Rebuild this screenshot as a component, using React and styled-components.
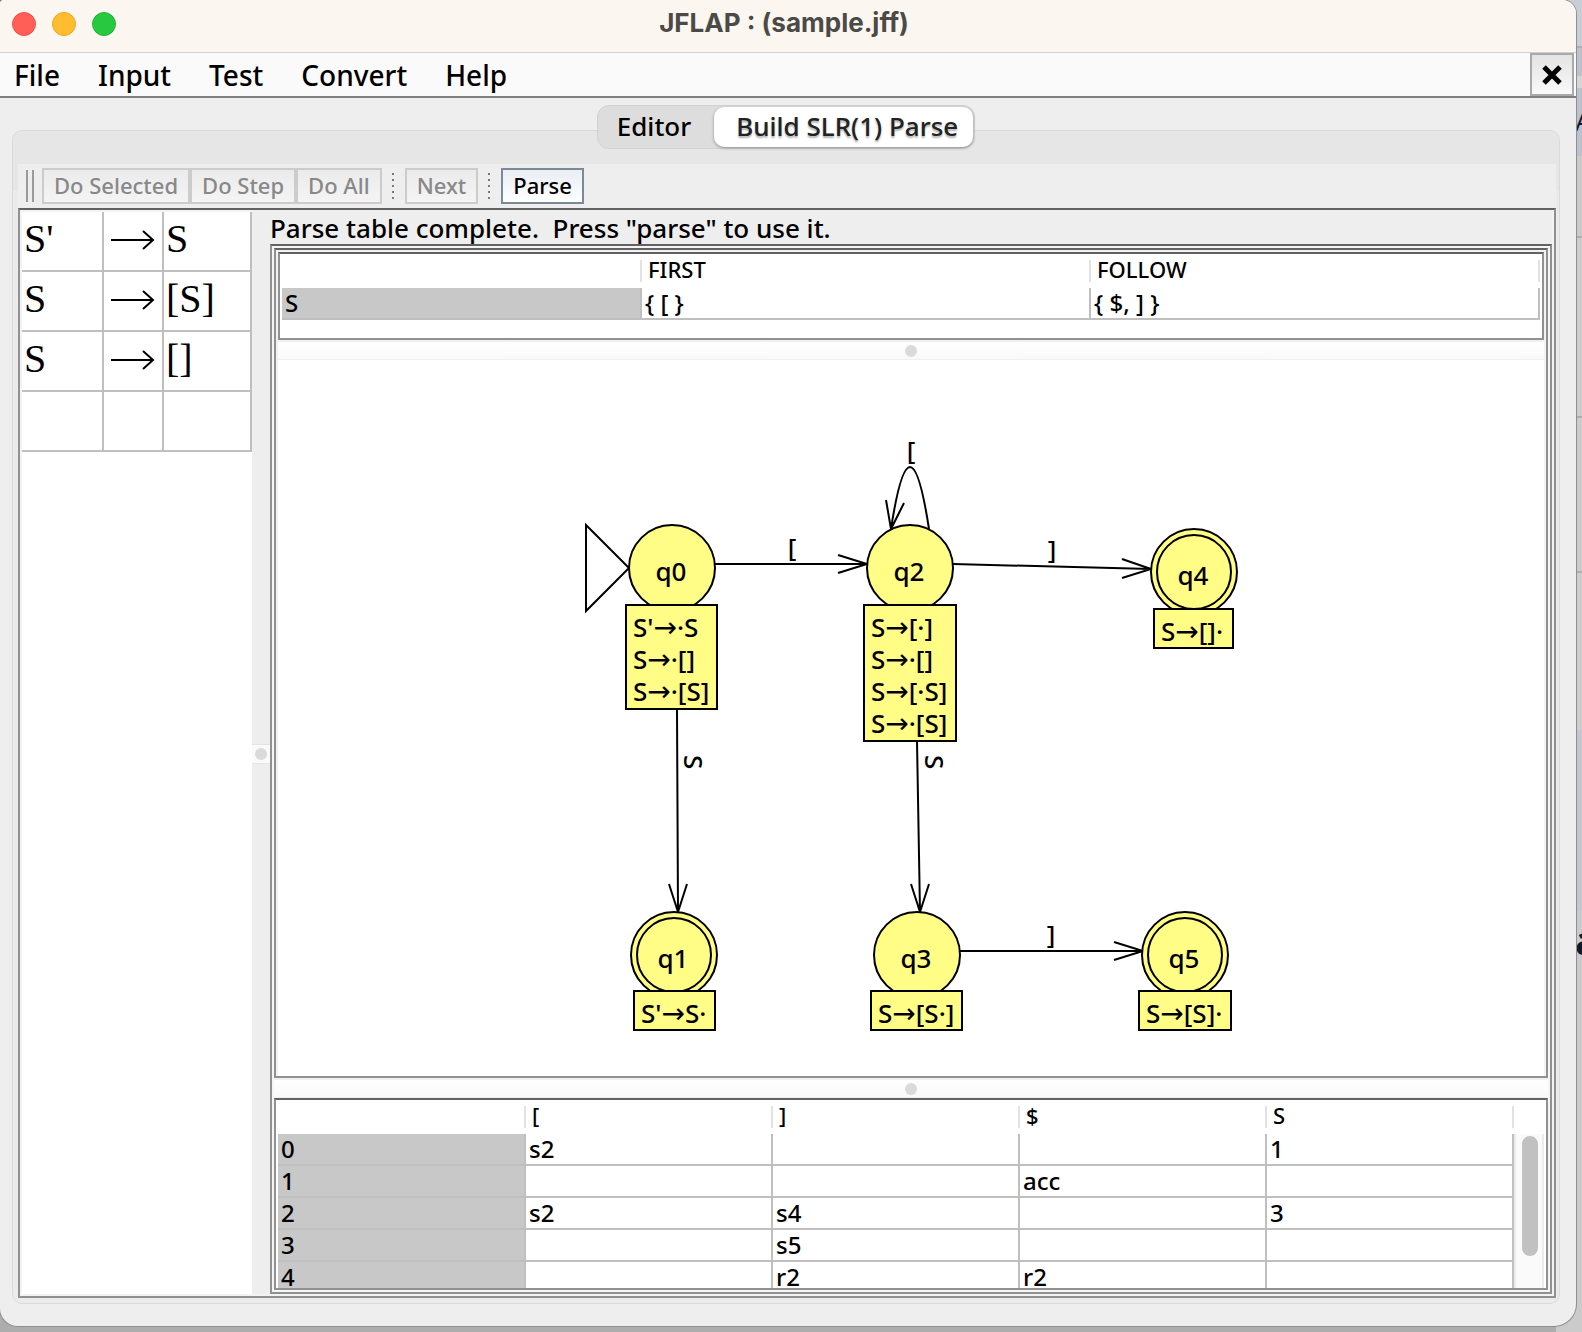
import React from "react";
import styled, { createGlobalStyle, css } from "styled-components";

const UI = '"Noto Sans", "Open Sans", sans-serif';
const DARK = "#626262";
const MID = "#919191";
const GRID = "#bfbfbf";

const GlobalStyle = createGlobalStyle`
  *, *::before, *::after { box-sizing: border-box; }
  body { margin: 0; background: #adadad; color: #000; font-family: ${UI}; font-weight: 500; }
  button { font-family: inherit; font-weight: inherit; color: inherit; margin: 0; }
  table { border-collapse: separate; border-spacing: 0; }
`;

/* ---------- desktop and window ---------- */

const Desktop = styled.div`
  display: grid;
  grid-template-columns: minmax(0, 1fr) 6px;
  grid-template-rows: minmax(0, 1fr) 6px;
  height: 100vh;
  min-height: 900px;
  overflow: hidden;
  background: linear-gradient(to bottom, #46586c 0 12px, #adadad 12px);
`;

const Behind = styled.div`
  display: flex;
  flex-direction: column;
  grid-row: 1 / span 2;
  grid-column: 2;
  margin-left: -20px;
  overflow: hidden;
`;

const Strip = styled.div`
  flex: ${(p) => (p.$h ? `0 0 ${p.$h}px` : "1 1 0")};
  background: ${(p) => p.$bg};
  border-top: ${(p) => (p.$line ? "2px solid #aeaeae" : "0")};
  padding-left: 19px;
  overflow: hidden;
  white-space: nowrap;
  font-size: ${(p) => p.$size || 26}px;
  font-weight: ${(p) => p.$weight || 400};
  line-height: ${(p) => p.$lh || 26}px;
  color: #0b1a30;
`;

const Window = styled.div`
  position: relative;
  z-index: 1;
  display: flex;
  flex-direction: column;
  min-height: 0;
  background: #eeeeee;
  border-radius: 4px 14px 22px 18px;
  box-shadow: 0 0 0 1px #8f8f8f;
  overflow: hidden;
`;

const TitleBar = styled.header`
  position: relative;
  flex: none;
  display: flex;
  justify-content: center;
  height: 53px;
  padding-right: 8px;
  background: #fbf7f0;
  border-bottom: 1px solid #cfcfcf;
`;

const Lights = styled.div`
  position: absolute;
  left: 12px;
  top: 12px;
  display: flex;
  gap: 16px;
`;

const Light = styled.button`
  width: 24px;
  height: 24px;
  padding: 0;
  border: 1px solid ${(p) => p.$edge};
  border-radius: 50%;
  background: ${(p) => p.$fill};
`;

const Title = styled.h1`
  margin: 0;
  font: 700 26px/46px Inter, sans-serif;
  color: #4b4a47;
`;

const MenuBar = styled.nav`
  flex: none;
  display: flex;
  height: 45px;
  padding: 0 2px 0 14px;
  background: #fafafa;
  border-bottom: 2px solid #7f7f7f;
`;

const Menus = styled.div`
  display: flex;
  flex: 1;
  gap: 38px;
`;

const MenuItem = styled.button`
  padding: 0;
  border: 0;
  background: none;
  font-size: 28px;
  line-height: 44px;
`;

const CloseButton = styled.button`
  display: grid;
  place-items: center;
  width: 44px;
  padding: 0;
  border: 2px solid #a9a9a9;
  background: linear-gradient(#e4e4e4, #f8f8f8);
`;

/* ---------- tabs ---------- */

const Body = styled.main`
  flex: 1;
  display: flex;
  flex-direction: column;
  min-height: 0;
  padding: 7px 16px 22px 12px;
`;

const Tabs = styled.div`
  position: relative;
  z-index: 1;
  flex: none;
  align-self: center;
  display: flex;
  height: 44px;
  margin-bottom: -19px;
  padding: 1px;
  border: 1px solid #d2d2d2;
  border-radius: 12px;
  background: #dddddd;
`;

const Tab = styled.button`
  padding: 0 23px 2px 18px;
  border: 0;
  border-radius: 10px;
  background: none;
  font-size: 26px;
  line-height: 38px;
  ${(p) =>
    p.$active &&
    css`
      padding: 0 15px 2px 22px;
      background: #fff;
      color: #222;
      box-shadow: 0 1px 3px #8a8a8a;
      text-shadow: 0 2px 2px #b0b0b0;
    `}
`;

const Panel = styled.section`
  flex: 1;
  display: flex;
  flex-direction: column;
  min-height: 0;
  padding: 33px 3px 5px 5px;
  border: 1px solid #dadada;
  border-radius: 10px;
  background: linear-gradient(to bottom, #e6e6e6 0 60px, #ebebeb 60px);
`;

/* ---------- toolbar ---------- */

const Toolbar = styled.div`
  flex: none;
  display: flex;
  align-items: center;
  height: 44px;
  padding-left: 8px;
  background: #eeeeee;
`;

const Grip = styled.span`
  width: 8px;
  height: 32px;
  margin-right: 8px;
  border: solid #9a9a9a;
  border-width: 0 2px;
`;

const Dots = styled.span`
  width: 2px;
  height: 26px;
  margin: 0 11px 0 10px;
  background: repeating-linear-gradient(#777 0 2px, transparent 2px 6px);
`;

const ToolButton = styled.button`
  height: 36px;
  padding: 0 10px 2px;
  border: 2px solid #7c8998;
  background: linear-gradient(#e9eef3, #ffffff);
  font-size: 22px;
  line-height: 30px;
  &:disabled {
    border-color: #cccccc;
    background: linear-gradient(#ebebeb, #f4f4f4);
    color: #888888;
  }
`;

/* ---------- split area ---------- */

const Split = styled.div`
  flex: 1;
  display: flex;
  min-height: 0;
  padding: 0 2px 2px;
  border: 2px solid ${MID};
  border-top-color: ${DARK};
  background: #f3f3f3;
`;

const Productions = styled.div`
  flex: 0 0 230px;
  margin-top: 2px;
  background: #fff;
`;

const ProductionTable = styled.table`
  width: 100%;
  table-layout: fixed;
  font: 40px/50px "Liberation Serif", "Times New Roman", serif;
  td {
    height: 60px;
    padding: 0 2px 4px;
    border: solid ${GRID};
    border-width: 0 2px 2px 0;
  }
  td:nth-child(1) { width: 82px; }
  td:nth-child(2) { width: 60px; padding: 0 0 2px 6px; }
  svg { display: block; }
`;

const SideDivider = styled.div`
  flex: 0 0 18px;
  display: flex;
  align-items: center;
  padding-top: 4px;
  background: #eeeeee;
`;

const SideHandle = styled.div`
  display: grid;
  place-items: center;
  width: 18px;
  height: 20px;
  background: #fafafa;
  border: solid #e4e4e4;
  border-width: 1px 0;
`;

const Knob = styled.span`
  width: 12px;
  height: 12px;
  border-radius: 50%;
  background: #dadada;
`;

const Work = styled.div`
  flex: 1;
  display: flex;
  flex-direction: column;
  min-width: 0;
  background: #eeeeee;
`;

const Status = styled.p`
  flex: none;
  margin: 0;
  height: 34px;
  font-size: 26px;
  line-height: 36px;
  white-space: pre;
`;

const frame = css`
  border: 2px solid ${MID};
  border-top-color: ${DARK};
`;

const OuterFrame = styled.div`
  ${frame}
  flex: 1;
  display: flex;
  flex-direction: column;
  min-height: 0;
  padding: 2px;
  background: #f5f5f5;
`;

const GraphFrame = styled.div`
  ${frame}
  flex: 1;
  display: flex;
  flex-direction: column;
  min-height: 0;
  padding: 2px 2px 0;
  background: #f2f2f2;
`;

const SetsFrame = styled.div`
  ${frame}
  flex: none;
  height: 88px;
  padding: 0 2px;
  background: #fff;
`;

const Divider = styled.div`
  flex: 0 0 20px;
  display: grid;
  place-items: center;
  border: solid #f0f0f0;
  border-width: 2px 0 1px;
  background: linear-gradient(#fff, #f9f9f9);
`;

const Canvas = styled.div`
  flex: 1;
  min-height: 0;
  background: #fff;
  svg { display: block; width: 100%; height: 100%; }
  text { font-family: ${UI}; font-size: 26px; }
`;

const TableFrame = styled.div`
  ${frame}
  flex: none;
  display: flex;
  height: 192px;
  padding: 0 2px;
  overflow: hidden;
  background: #fff;
`;

const DataTable = styled.table`
  flex: 1;
  width: 100%;
  height: max-content;
  table-layout: fixed;
  text-align: left;
  line-height: 30px;
  thead th {
    height: 34px;
    padding: 0 6px 4px;
    font-size: 22px;
    font-weight: 500;
    background: linear-gradient(#e2e2e2, #e2e2e2) no-repeat right center / 2px 22px;
  }
  thead td {
    background: linear-gradient(#e2e2e2, #e2e2e2) no-repeat right center / 2px 22px;
  }
  tbody th, tbody td {
    height: 32px;
    padding: 0 3px;
    border: solid ${GRID};
    border-width: 0 2px 2px 0;
    font-size: 24px;
    font-weight: 500;
  }
  tbody th { background: #c8c8c8; }
`;

const LeadCol = styled.col`
  width: ${(p) => p.$w};
`;

const ScrollTrack = styled.div`
  flex: 0 0 30px;
  margin-top: 34px;
  padding: 2px 4px 0 6px;
  border: solid #ebebeb;
  border-width: 0 2px;
  background: #fafafa;
`;

const ScrollThumb = styled.div`
  width: 16px;
  height: 120px;
  border-radius: 8px;
  background: #c1c1c1;
`;

/* ---------- data ---------- */

const productions = [["S'", "S"], ["S", "[S]"], ["S", "[]"], null];

const parseRows = [
  ["0", "s2", "", "", "1"],
  ["1", "", "", "acc", ""],
  ["2", "s2", "s4", "", "3"],
  ["3", "", "s5", "", ""],
  ["4", "", "r2", "r2", ""],
];

const states = [
  { id: "q0", x: 672, y: 568, box: [626, 605, 91, 104], items: [["S'", "·S"], ["S", "·[]"], ["S", "·[S]"]] },
  { id: "q2", x: 910, y: 568, box: [864, 605, 92, 136], items: [["S", "[·]"], ["S", "·[]"], ["S", "[·S]"], ["S", "·[S]"]] },
  { id: "q4", x: 1194, y: 572, final: true, box: [1154, 609, 79, 39], items: [["S", "[]·"]] },
  { id: "q1", x: 674, y: 955, final: true, box: [634, 991, 81, 39], items: [["S'", "S·"]] },
  { id: "q3", x: 917, y: 955, box: [871, 991, 91, 39], items: [["S", "[S·]"]] },
  { id: "q5", x: 1185, y: 955, final: true, box: [1139, 991, 92, 39], items: [["S", "[S]·"]] },
];

const edges = [
  "M715 564H867M838 555L867 564L838 573",
  "M953 564L1151 569M1122 559L1151 569L1122 578",
  "M677 709L678 912M669 884L678 912L687 884",
  "M917 741L920 912M911 884L920 912L929 884",
  "M960 951H1143M1114 942L1143 951L1114 960",
  "M929 529Q910 405 891 529M886 500L891 529L904 503",
];

const edgeLabels = [
  [792, 557, "["],
  [911, 460, "["],
  [1052, 559, "]"],
  [1051, 944, "]"],
];

function State({ id, x, y, final, box, items }) {
  const [bx, by, bw, bh] = box;
  return (
    <g>
      <circle cx={x} cy={y} r="43" />
      {final && <circle cx={x} cy={y} r="37" />}
      <rect x={bx} y={by} width={bw} height={bh} />
      <g fill="#000" stroke="none">
        <text x={x - 1} y={y + 13} textAnchor="middle">{id}</text>
        {items.map(([left, right], i) => (
          <text key={i} x={bx + 7} y={by + 32 + i * 32}>
            {left}
            <tspan fontFamily="DejaVu Sans" fontSize="28">→</tspan>
            {right}
          </text>
        ))}
      </g>
    </g>
  );
}

function Automaton() {
  return (
    <svg viewBox="278 360 1266 716" role="img" aria-label="SLR(1) automaton">
      <g fill="none" stroke="#000" strokeWidth="2">
        {edges.map((d) => <path key={d} d={d} />)}
        <path d="M586 525L629 568L586 611Z" />
      </g>
      {edgeLabels.map(([x, y, t]) => (
        <text key={`${x}-${y}`} x={x} y={y} textAnchor="middle">{t}</text>
      ))}
      <text transform="translate(684 755) rotate(90)">S</text>
      <text transform="translate(925 755) rotate(90)">S</text>
      <g fill="#fffd85" stroke="#000" strokeWidth="2">
        {states.map((s) => <State key={s.id} {...s} />)}
      </g>
    </svg>
  );
}

export default function App() {
  return (
    <Desktop>
      <GlobalStyle />
      <Window>
        <TitleBar>
          <Lights>
            <Light aria-label="Close" $fill="#ff5f57" $edge="#ee5249" />
            <Light aria-label="Minimize" $fill="#febc2e" $edge="#e8a823" />
            <Light aria-label="Zoom" $fill="#28c840" $edge="#20b637" />
          </Lights>
          <Title>JFLAP : (sample.jff)</Title>
        </TitleBar>
        <MenuBar>
          <Menus>
            {["File", "Input", "Test", "Convert", "Help"].map((m) => (
              <MenuItem key={m}>{m}</MenuItem>
            ))}
          </Menus>
          <CloseButton aria-label="Close tab">
            <svg width="20" height="20" viewBox="0 0 20 20" stroke="#000" strokeWidth="5">
              <path d="M2 2L18 18M18 2L2 18" />
            </svg>
          </CloseButton>
        </MenuBar>
        <Body>
          <Tabs role="tablist">
            <Tab role="tab" aria-selected="false">Editor</Tab>
            <Tab role="tab" aria-selected="true" $active>Build SLR(1) Parse</Tab>
          </Tabs>
          <Panel>
            <Toolbar role="toolbar">
              <Grip />
              <ToolButton disabled>Do Selected</ToolButton>
              <ToolButton disabled>Do Step</ToolButton>
              <ToolButton disabled>Do All</ToolButton>
              <Dots />
              <ToolButton disabled>Next</ToolButton>
              <Dots />
              <ToolButton>Parse</ToolButton>
            </Toolbar>
            <Split>
              <Productions>
                <ProductionTable>
                  <tbody>
                    {productions.map((p, i) => (
                      <tr key={i}>
                        <td>{p && p[0]}</td>
                        <td>
                          {p && (
                            <svg width="46" height="20" fill="none" stroke="#000" strokeWidth="2">
                              <path d="M1 10H43M33 1L43 10L33 19" />
                            </svg>
                          )}
                        </td>
                        <td>{p && p[1]}</td>
                      </tr>
                    ))}
                  </tbody>
                </ProductionTable>
              </Productions>
              <SideDivider role="separator">
                <SideHandle><Knob /></SideHandle>
              </SideDivider>
              <Work>
                <Status>{'Parse table complete.  Press "parse" to use it.'}</Status>
                <OuterFrame>
                  <GraphFrame>
                    <SetsFrame>
                      <DataTable>
                        <colgroup>
                          <LeadCol $w="360px" />
                          <col />
                          <col />
                        </colgroup>
                        <thead>
                          <tr><td /><th>FIRST</th><th>FOLLOW</th></tr>
                        </thead>
                        <tbody>
                          <tr><th>S</th><td>{"{ [ }"}</td><td>{"{ $, ] }"}</td></tr>
                        </tbody>
                      </DataTable>
                    </SetsFrame>
                    <Divider role="separator"><Knob /></Divider>
                    <Canvas><Automaton /></Canvas>
                  </GraphFrame>
                  <Divider role="separator"><Knob /></Divider>
                  <TableFrame>
                    <DataTable>
                      <colgroup>
                        <LeadCol $w="248px" />
                        <col span="4" />
                      </colgroup>
                      <thead>
                        <tr><td /><th>[</th><th>]</th><th>$</th><th>S</th></tr>
                      </thead>
                      <tbody>
                        {parseRows.map(([n, ...cells]) => (
                          <tr key={n}>
                            <th>{n}</th>
                            {cells.map((c, i) => <td key={i}>{c}</td>)}
                          </tr>
                        ))}
                      </tbody>
                    </DataTable>
                    <ScrollTrack><ScrollThumb /></ScrollTrack>
                  </TableFrame>
                </OuterFrame>
              </Work>
            </Split>
          </Panel>
        </Body>
      </Window>
      <Behind>
        <Strip $h={46} $bg="#c9ced6" />
        <Strip $h={30} $bg="#bcc1cb" $line />
        <Strip $h={12} $bg="#d6d6d6" />
        <Strip $h={68} $bg="#bbc1cd" $lh={66}>A</Strip>
        <Strip $h={80} $bg="#cacaca" />
        <Strip $h={180} $bg="#cdcdcd" $line />
        <Strip $h={155} $bg="#cccccc" $line />
        <Strip $h={159} $bg="#cdcdcd" $line />
        <Strip $h={180} $bg="#c4c7ce" />
        <Strip $h={60} $bg="#cacbce" $size={40} $weight={700} $lh={60}>a</Strip>
        <Strip $bg="#cbcbcb" />
      </Behind>
    </Desktop>
  );
}
